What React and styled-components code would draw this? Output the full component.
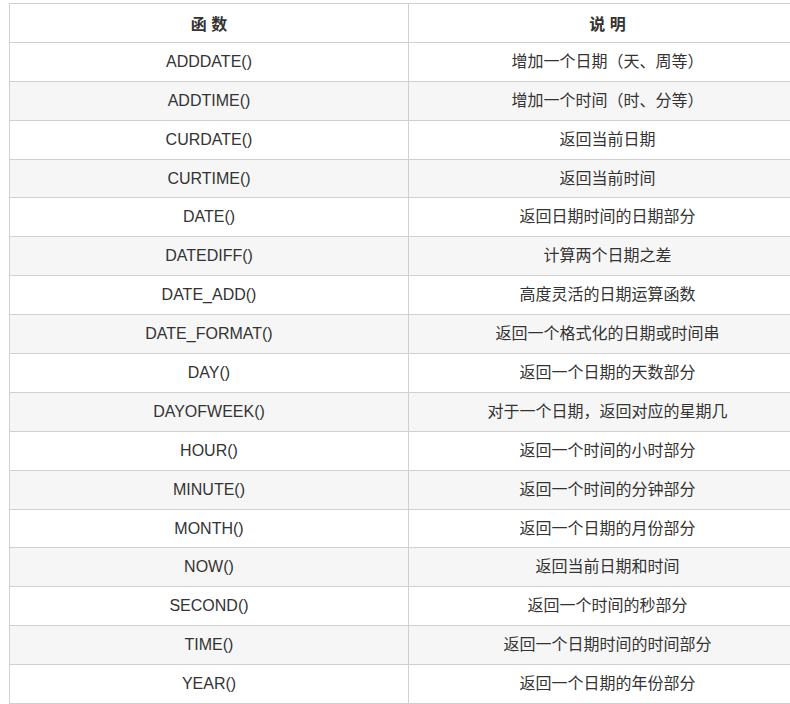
import React from "react";
import styled, { createGlobalStyle } from "styled-components";

const GlobalStyle = createGlobalStyle`
  html, body {
    margin: 0;
    padding: 0;
    background: #fff;
    overflow: hidden;
  }
  body {
    font-family: "Liberation Sans", Arial, "Noto Sans CJK SC", sans-serif;
    color: #333;
  }
`;

const Page = styled.div`
  padding: 3px 0 0 9px;
  width: 781px;
  height: 701px;
  overflow: hidden;
`;

const Table = styled.table`
  border-collapse: collapse;
  width: 792px;
  table-layout: fixed;
  font-size: 16px;
`;

const Col = styled.col`
  width: ${(p) => p.$width}px;
`;

const Row = styled.tr`
  height: 38.9px;
  background: ${(p) => (p.$striped ? "#f6f6f6" : "#fff")};
`;

const HeadCell = styled.th`
  border: 1px solid #d0d0d0;
  padding: 0 8px;
  font-size: 16px;
  font-weight: bold;
  text-align: center;
  color: #333;
`;

const Cell = styled.td`
  border: 1px solid #d0d0d0;
  padding: 0 8px;
  text-align: center;
  color: #333;
  line-height: 1;
`;

const rows = [
  ["ADDDATE()", "增加一个日期（天、周等）"],
  ["ADDTIME()", "增加一个时间（时、分等）"],
  ["CURDATE()", "返回当前日期"],
  ["CURTIME()", "返回当前时间"],
  ["DATE()", "返回日期时间的日期部分"],
  ["DATEDIFF()", "计算两个日期之差"],
  ["DATE_ADD()", "高度灵活的日期运算函数"],
  ["DATE_FORMAT()", "返回一个格式化的日期或时间串"],
  ["DAY()", "返回一个日期的天数部分"],
  ["DAYOFWEEK()", "对于一个日期，返回对应的星期几"],
  ["HOUR()", "返回一个时间的小时部分"],
  ["MINUTE()", "返回一个时间的分钟部分"],
  ["MONTH()", "返回一个日期的月份部分"],
  ["NOW()", "返回当前日期和时间"],
  ["SECOND()", "返回一个时间的秒部分"],
  ["TIME()", "返回一个日期时间的时间部分"],
  ["YEAR()", "返回一个日期的年份部分"],
];

export default function App() {
  return (
    <Page>
      <GlobalStyle />
      <Table>
        <colgroup>
          <Col $width={399} />
          <Col $width={398} />
        </colgroup>
        <thead>
          <Row>
            <HeadCell>函 数</HeadCell>
            <HeadCell>说 明</HeadCell>
          </Row>
        </thead>
        <tbody>
          {rows.map(([fn, desc], i) => (
            <Row key={fn} $striped={i % 2 === 1}>
              <Cell>{fn}</Cell>
              <Cell>{desc}</Cell>
            </Row>
          ))}
        </tbody>
      </Table>
    </Page>
  );
}
